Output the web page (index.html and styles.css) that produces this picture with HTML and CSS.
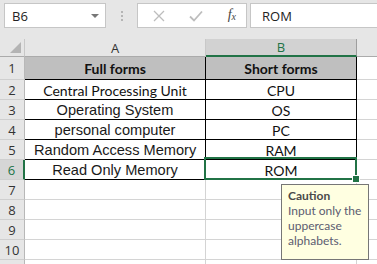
FILE: index.html
```html
<!DOCTYPE html>
<html lang="en">
<head>
    <meta charset="UTF-8">
    <title>Data validation</title>
    <link rel="stylesheet" href="styles.css">
</head>
<body>
    <div class="toolbar">
        <div class="namebox">
            <span>B6</span>
            <span class="caret"></span>
        </div>
        <div class="grip"><i></i><i></i><i></i></div>
        <div class="fxbtns">
            <svg class="ico" width="12" height="12" viewBox="0 0 12 12">
                <path d="M1 1 L11 11 M11 1 L1 11" stroke="#bdbdbd" stroke-width="1.3" fill="none"/>
            </svg>
            <svg class="ico" width="14" height="12" viewBox="0 0 14 12">
                <path d="M1 6.5 L5 10.5 L13 1.5" stroke="#bdbdbd" stroke-width="1.8" fill="none"/>
            </svg>
            <span class="fx">f<sub>x</sub></span>
        </div>
        <div class="formula">ROM</div>
    </div>

    <div class="sheet">
        <div class="corner"><span class="tri"></span></div>
        <div class="colhead">A</div>
        <div class="colhead sel">B</div>
        <div class="colhead blank"></div>

        <div class="rowhead">1</div>
        <div class="cell a head">Full forms</div>
        <div class="cell b head">Short forms</div>
        <div class="cell c"></div>

        <div class="rowhead">2</div>
        <div class="cell a">Central Processing Unit</div>
        <div class="cell b">CPU</div>
        <div class="cell c"></div>

        <div class="rowhead">3</div>
        <div class="cell a arial">Operating System</div>
        <div class="cell b">OS</div>
        <div class="cell c"></div>

        <div class="rowhead">4</div>
        <div class="cell a arial">personal computer</div>
        <div class="cell b">PC</div>
        <div class="cell c"></div>

        <div class="rowhead">5</div>
        <div class="cell a arial spill">Random Access Memory</div>
        <div class="cell b">RAM</div>
        <div class="cell c"></div>

        <div class="rowhead sel">6</div>
        <div class="cell a arial">Read Only Memory</div>
        <div class="cell b">ROM</div>
        <div class="cell c"></div>

        <div class="rowhead">7</div>
        <div class="cell a plain"></div>
        <div class="cell b plain"></div>
        <div class="cell c"></div>

        <div class="rowhead">8</div>
        <div class="cell a plain"></div>
        <div class="cell b plain"></div>
        <div class="cell c"></div>

        <div class="rowhead">9</div>
        <div class="cell a plain"></div>
        <div class="cell b plain"></div>
        <div class="cell c"></div>

        <div class="rowhead">10</div>
        <div class="cell a plain"></div>
        <div class="cell b plain"></div>
        <div class="cell c"></div>

        <div class="rowhead"></div>
        <div class="cell a plain"></div>
        <div class="cell b plain"></div>
        <div class="cell c"></div>

        <div class="selection"><span class="handle"></span></div>
    </div>

    <div class="tooltip">
        <b>Caution</b>
        <p>Input only the uppercase alphabets.</p>
    </div>
</body>
</html>
```

FILE: styles.css
```css
body {
    margin: 0;
    width: 377px;
    height: 264px;
    overflow: hidden;
    position: relative;
    background: #e6e6e6;
    font-family: "Open Sans", "Noto Sans", sans-serif;
}
.toolbar {
    height: 39px;
    box-sizing: border-box;
    padding: 3px 0 0 4px;
    display: flex;
    align-items: flex-start;
}
.namebox, .fxbtns, .formula {
    height: 25px;
    box-sizing: border-box;
    background: #fff;
    border: 1px solid #c6c6c6;
    display: flex;
    align-items: center;
}
.namebox {
    width: 102px;
    padding: 0 0 0 7px;
    font-size: 13px;
    color: #222;
    justify-content: space-between;
}
.caret {
    width: 0;
    height: 0;
    border-left: 4px solid transparent;
    border-right: 4px solid transparent;
    border-top: 4px solid #777;
    margin-right: 6px;
    margin-top: 1px;
}
.grip {
    width: 31px;
    height: 25px;
    display: flex;
    flex-direction: column;
    align-items: center;
    justify-content: center;
    gap: 2px;
}
.grip i {
    width: 2px;
    height: 2px;
    background: #b5b5b5;
}
.fxbtns {
    width: 110px;
    padding: 0 10px 0 15px;
    justify-content: space-between;
}
.fx {
    font-family: "Liberation Serif", serif;
    font-style: italic;
    font-size: 14px;
    color: #444;
    margin-top: -2px;
}
.fx sub {
    font-size: 10px;
    vertical-align: -1px;
}
.formula {
    flex: 1;
    margin-left: 3px;
    margin-right: -2px;
    padding-left: 11px;
    font-size: 13px;
    color: #222;
}
.sheet {
    position: relative;
    display: grid;
    grid-template-columns: 25px 181px 151px 1fr;
    grid-template-rows: 18px 23px repeat(10, 20px);
}
.corner, .colhead, .rowhead, .cell {
    box-sizing: border-box;
    display: flex;
    align-items: center;
    justify-content: center;
}
.corner {
    background: #e6e6e6;
    border-right: 1px solid #c8c8c8;
    border-bottom: 1px solid #ababab;
    justify-content: flex-end;
    align-items: flex-end;
    padding: 0 3px 3px 0;
}
.tri {
    width: 0;
    height: 0;
    border-left: 11px solid transparent;
    border-bottom: 11px solid #b4b4b4;
}
.colhead {
    background: #e6e6e6;
    border-right: 1px solid #c8c8c8;
    border-bottom: 1px solid #ababab;
    font-size: 13px;
    color: #333;
}
.colhead.sel {
    background: #d2d2d2;
    color: #217346;
    border-right-color: #9e9e9e;
    border-bottom: 2px solid #217346;
}
.colhead.blank {
    border-right: none;
}
.rowhead {
    background: #e6e6e6;
    border-right: 1px solid #b8b8b8;
    border-bottom: 1px solid #cfcfcf;
    font-size: 13px;
    color: #333;
}
.rowhead.sel {
    background: #d6d6d6;
    color: #217346;
    border-right: 2px solid #217346;
}
.cell {
    background: #fff;
    border-right: 1px solid #000;
    border-bottom: 1px solid #000;
    font-family: Lato, "Open Sans", sans-serif;
    font-size: 14px;
    color: #111;
    white-space: nowrap;
    padding-top: 1px;
}
.cell.head {
    background: #bfbfbf;
    font-weight: bold;
}
.cell.arial {
    font-family: "Liberation Sans", Arial, sans-serif;
    font-size: 14.6px;
    color: #1a1a1a;
}
.cell.spill {
    overflow: visible;
    position: relative;
    z-index: 1;
    justify-content: flex-start;
    padding-left: 9px;
}
.cell.plain {
    border-right-color: #d4d4d4;
    border-bottom-color: #d4d4d4;
}
.cell.c {
    border-right: none;
    border-bottom: 1px solid #d4d4d4;
}
.selection {
    position: absolute;
    left: 204px;
    top: 118px;
    width: 153px;
    height: 23px;
    box-sizing: border-box;
    border: 2px solid #217346;
    pointer-events: none;
    z-index: 2;
}
.handle {
    position: absolute;
    right: -5px;
    bottom: -5px;
    width: 6px;
    height: 6px;
    background: #217346;
    border: 1px solid #fff;
}
.tooltip {
    position: absolute;
    left: 281px;
    top: 184px;
    width: 88px;
    height: 76px;
    box-sizing: border-box;
    background: #ffffe1;
    border: 1px solid #767676;
    padding: 3px 0 0 6px;
    font-family: Lato, "Open Sans", sans-serif;
    font-size: 12px;
    line-height: 15px;
    color: #5c5c70;
    z-index: 3;
}
.tooltip b {
    display: block;
    color: #4a4a4a;
}
.tooltip p {
    margin: 0;
}
```
